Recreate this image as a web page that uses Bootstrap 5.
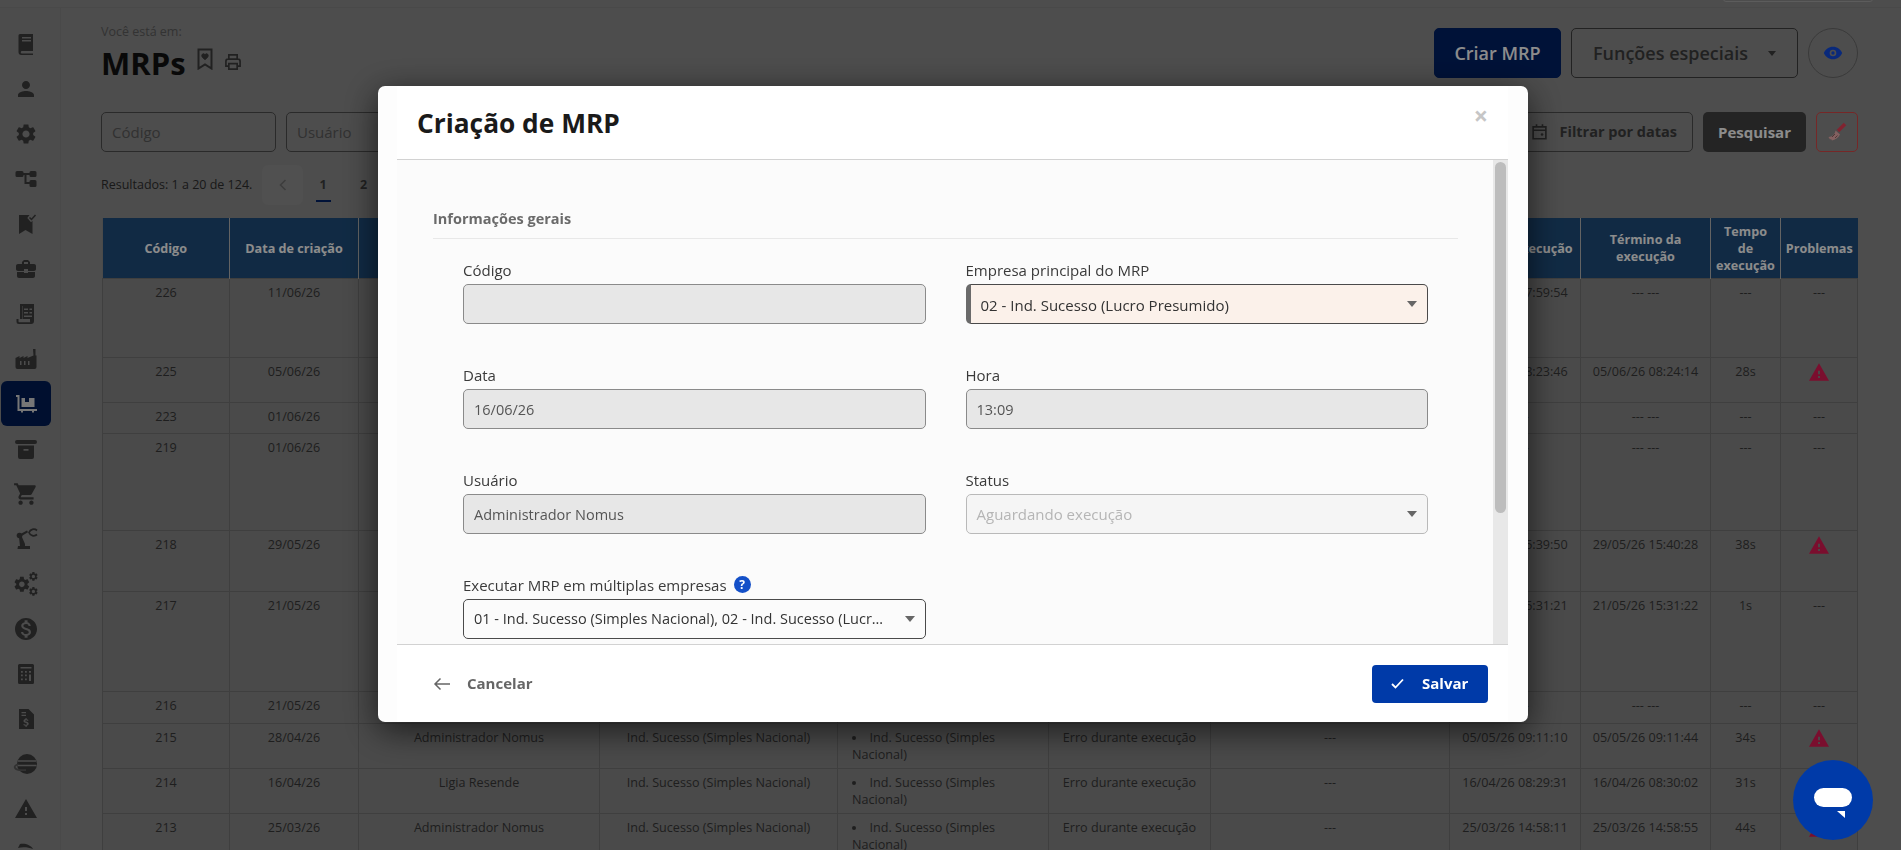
<!DOCTYPE html>
<html lang="pt-BR">
<head>
<meta charset="utf-8">
<title>MRPs</title>
<link href="https://cdn.jsdelivr.net/npm/bootstrap@5.3.0/dist/css/bootstrap.min.css" rel="stylesheet">
<style>
html,body{height:850px;overflow:hidden}
body{font-family:"Open Sans",sans-serif;background:#8c8c8c;color:#3a3a3a;font-size:14px}
.topstrip{height:8px;border-bottom:1px solid #858585;overflow:hidden;padding-right:28px}
.topsearch{width:150px;height:30px;margin-top:-28px;border:1px solid #a8a8a8;border-radius:3px}
.shell{height:842px}
.sidemenu{width:61px;flex:none;border-right:1px solid #858585;background:#8a8a8a;padding:13px 0 0 1px;overflow:hidden}
.sideitem{width:50px;height:45px;border-radius:6px}
.sideitem svg{fill:#3c3c3c}
.sideitem.onpage{background:#001d56}
.sideitem.onpage svg{fill:#d8d8d8}
.mainarea{flex:1;min-width:0;padding:15px 43px 0 40px;overflow:hidden}
.pagehead{height:89px}
.youare{font-size:12.5px;line-height:17px;color:#5d5d5d}
.pagetitle{font-size:31px;font-weight:700;line-height:42px;color:#121212;margin:2px 0 0}
.headicon{fill:none;stroke:#3c3c3c;stroke-width:2}
.titleicons{gap:9px;margin-left:2px}
.bookicon{margin-top:8px}
.printicon{margin-top:12px}
.headactions{gap:10px;margin-top:5px}
.bigbtn{height:50px;font-size:18px;font-weight:600;border-radius:5px;padding:0}
.btn-create{width:127px;background:#002166;border-color:#002166;color:#fff}
.btn-special{width:227px;background:transparent;border:1px solid #3e3e3e;color:#3c3c3c}
.caret-mini{width:0;height:0;border-left:4.5px solid transparent;border-right:4.5px solid transparent;border-top:5px solid #3c3c3c;margin-left:20px}
.btn-eye{width:50px;height:50px;border:1px solid #6a6a6a;border-radius:50%;padding:0;background:transparent}
.filterbar{height:40px;gap:10px}
.pageinput{width:175px;height:40px;border:1px solid #4e4e4e;border-radius:5px;padding:0 10px;font-size:15px;color:#5d5d5d;background:transparent}
.pageinput::placeholder{color:#5a5a5a;opacity:1}
.btn-dates{width:250px;height:40px;border:1px solid #4e4e4e;border-radius:5px;background:transparent;font-size:14.5px;font-weight:700;color:#3c3c3c;padding:0 15px 0 0;gap:12px}
.btn-search{width:103px;height:40px;background:#424242;border:0;border-radius:5px;color:#fff;font-size:15px;font-weight:700;padding:1px 0 0}
.btn-broom{width:42px;height:40px;background:transparent;border:1px solid #d84848;border-radius:5px;padding:0}
.resultbar{height:40px;margin:13px 0 13px}
.resulttext{font-size:12.5px;color:#2e2e2e;margin-right:10px;white-space:nowrap}
.pagerlist{list-style:none;margin:0;padding:0}
.pagerlist li{width:40.5px;height:40px;font-size:12.5px;font-weight:700;color:#3c3c3c;position:relative}
.pagerlist li.prevbox{background:#929292;border-radius:6px;color:#707070}
.pagerlist li.curpage::after{content:"";position:absolute;left:13px;bottom:3px;width:15px;height:2px;background:#002166}
.datatable{table-layout:fixed;width:1755px;margin-left:1px;border-collapse:collapse;font-size:12.6px;line-height:17px;color:#383838;background:#878787}
.datatable th{background:#1f4e7d;color:#fff;font-weight:700;text-align:center;vertical-align:middle;border-right:1px solid #b5b5b5;padding:1px 2px 0;height:60px}
.datatable th:last-child{border-right:0}
.datatable td{border:1px solid #737373;text-align:center;vertical-align:top;padding:5px 8px;overflow:hidden}
.datatable td.nowrapcell{white-space:nowrap;padding:5px 0}
.datatable td.leftcell{text-align:left;padding-left:14px}
.datatable ul{list-style-position:inside;margin:0;padding:0}
.c1{width:127px}.c2{width:129px}.c3{width:241px}.c4{width:238px}.c5{width:211px}.c6{width:162px}.c7{width:239px}.c8{width:131px}.c9{width:130px}.c10{width:70px}.c11{width:77px}
.r79{height:79px}.r45{height:45px}.r31{height:31px}.r97{height:97px}.r61{height:61px}.r100{height:100px}.r32{height:32px}
.warnicon{fill:#de1b54;display:block;margin:0 auto}
.modal-dialog.mrpdialog{max-width:1150px;width:1150px;margin:86px 0 0 378px}
.modal-content.mrpcontent{height:636px;border:0;border-radius:7px;background:#fdfdfd;padding:0 20px 0 19px;box-shadow:0 8px 34px rgba(0,0,0,.65);overflow:hidden;flex-direction:column}
.modal-header.mrphead{height:74px;flex:none;padding:0 20px;background:#fff;border-bottom:1px solid #d2d2d2;border-radius:0;position:relative}
.modal-title.mrptitle{font-size:26.3px;font-weight:700;color:#1a1a1a;line-height:32px;margin-top:0}
.closemark{font-size:25px;line-height:1;color:#c6c6c6;font-weight:700;border:0;background:none;padding:0;position:absolute;right:20px;top:17px}
.bodywrap{height:484px;flex:none;background:#fbfbfb;overflow:hidden}
.modal-body.mrpbody{padding:49px 35px 0 36px;overflow:hidden}
.sectionhead{font-size:14.5px;font-weight:700;line-height:20px;color:#6a6a6a;padding-bottom:9px;border-bottom:1px solid #e8e8e8;margin-bottom:21px}
.fieldwrap{padding:0 30px}
.fieldrow{--bs-gutter-x:40px;--bs-gutter-y:0}
.fieldgroup{margin-bottom:41px}
.fieldlabel{font-size:15px;line-height:18px;color:#3a3a3a;margin-bottom:5px;display:flex;align-items:center;gap:7px;height:19px}
.mrpinput{height:40px;font-size:14.5px;line-height:20px;padding:9px 10px;border:1px solid #8a8a8a;border-radius:5px;color:#333;box-shadow:none}
.mrpinput:disabled{background:#e7e7e7;color:#555;opacity:1;border-color:#8a8a8a}
.mrpselect{height:40px;font-size:15px;line-height:20px;padding:10px 36px 8px 10px;border:1px solid #4a4a4a;border-radius:5px;color:#333;background-color:transparent;background-image:url("data:image/svg+xml,%3Csvg xmlns='http://www.w3.org/2000/svg' viewBox='0 0 10 6'%3E%3Cpath fill='%23666' d='M0 0h10L5 6z'/%3E%3C/svg%3E");background-size:10px 6px;background-position:right 10px center}
.mrpselect.mainfirm{background-color:#fbf1ea;border-left:5px solid #6a6a6a;padding-left:10px}
.mrpselect.lockselect{background-color:#f5f5f5;border-color:#b9b9b9;color:#b5b5b5;padding-top:9px;padding-bottom:9px}
.mrpselect.multifirm{font-size:14.5px;padding-top:9px;padding-bottom:9px}
.helpdot{width:17px;height:17px;border-radius:50%;background:#1450c8;color:#fff;font-size:12px;font-weight:700;line-height:17px;text-align:center}
.fakescroll{width:15px;flex:none;background:#e8e8e8;padding:2px 2px 0}
.fakethumb{height:351px;background:#bdbdbd;border-radius:6px}
.modal-footer.mrpfoot{height:78px;flex:none;padding:0 20px 0 36px;border-top:1px solid #d2d2d2;border-radius:0;justify-content:space-between;background:#fff}
.modal-footer.mrpfoot>*{margin:0}
.btn-cancel{background:none;border:0;padding:0;font-size:15px;font-weight:700;color:#666;gap:16px}
.btn-save{width:116px;height:38px;background:#003aa8;border:0;border-radius:4px;color:#fff;font-size:15px;font-weight:700;padding:0 0 0 19px;gap:18px}
.chatbubble{position:fixed;left:1793px;top:760px;width:80px;height:80px;border-radius:50%;background:#003aa8;z-index:1060}
.modal-backdrop{--bs-backdrop-opacity:.45}
</style>
</head>
<body>
<div class="topstrip d-flex justify-content-end"><div class="topsearch"></div></div>
<div class="shell d-flex">
  <nav class="sidemenu">
    <div class="sideitem d-flex align-items-center justify-content-center"><svg width="24" height="24" viewBox="0 0 24 24"><path fill-rule="evenodd" d="M6 2h13v17H8a1.300 1.300 0 0 0 0 2.600h11V23H7.500A3 3 0 0 1 4.500 20V3.500A1.500 1.500 0 0 1 6 2zm2 3v1.400h9V5zm0 3v1.400h9V8z"/></svg></div>
    <div class="sideitem d-flex align-items-center justify-content-center"><svg width="24" height="24" viewBox="0 0 24 24"><path d="M12 12c2.210 0 4-1.790 4-4s-1.790-4-4-4-4 1.790-4 4 1.790 4 4 4zm0 2c-2.670 0-8 1.340-8 4v2h16v-2c0-2.660-5.330-4-8-4z"/></svg></div>
    <div class="sideitem d-flex align-items-center justify-content-center"><svg width="24" height="24" viewBox="0 0 24 24"><path d="M19.140 12.940c.04-.3.060-.61.060-.94 0-.32-.02-.64-.07-.94l2.030-1.580c.18-.14.230-.41.120-.61l-1.920-3.320c-.12-.22-.37-.29-.59-.22l-2.390.96c-.5-.38-1.030-.7-1.620-.94l-.36-2.540c-.04-.24-.24-.41-.48-.41h-3.840c-.24 0-.43.170-.47.41l-.36 2.540c-.59.24-1.130.57-1.620.94l-2.390-.96c-.22-.08-.47 0-.59.22L2.740 8.870c-.12.21-.08.47.12.61l2.030 1.580c-.05.3-.09.63-.09.94s.02.64.07.94l-2.030 1.580c-.18.14-.23.41-.12.61l1.920 3.320c.12.22.37.29.59.22l2.390-.96c.5.38 1.030.7 1.620.94l.36 2.540c.05.24.24.41.48.41h3.840c.24 0 .44-.17.47-.41l.36-2.540c.59-.24 1.130-.56 1.620-.94l2.390.96c.22.08.47 0 .59-.22l1.920-3.320c.12-.22.070-.47-.12-.61l-2.010-1.580zM12 15.600c-1.980 0-3.600-1.620-3.600-3.600s1.620-3.600 3.600-3.600 3.600 1.620 3.600 3.600-1.620 3.600-3.600 3.600z"/></svg></div>
    <div class="sideitem d-flex align-items-center justify-content-center"><svg width="24" height="24" viewBox="0 0 24 24"><path d="M3 4h5a1.500 1.500 0 0 1 1.500 1.500V6h6v-.5A1.500 1.500 0 0 1 17 4h4a1.500 1.500 0 0 1 1.500 1.500v3A1.500 1.500 0 0 1 21 10h-4a1.500 1.500 0 0 1-1.500-1.500V8h-3v7h3v-.5A1.500 1.500 0 0 1 17 13h4a1.500 1.500 0 0 1 1.500 1.500v4A1.500 1.500 0 0 1 21 20h-4a1.500 1.500 0 0 1-1.500-1.500V17h-5V8h-1v.5A1.500 1.500 0 0 1 8 10H3a1.500 1.500 0 0 1-1.500-1.500v-3A1.500 1.500 0 0 1 3 4z"/></svg></div>
    <div class="sideitem d-flex align-items-center justify-content-center"><svg width="24" height="24" viewBox="0 0 24 24"><path d="M5 3h10.500l-2.200 3 3.700 4.200 1.500-1.400V22l-7-4-6.500 4z"/><path d="M15.500 5.500l2 2 4-4.500" fill="none" stroke="#3c3c3c" stroke-width="1.500"/></svg></div>
    <div class="sideitem d-flex align-items-center justify-content-center"><svg width="24" height="24" viewBox="0 0 24 24"><path d="M10 16v-1H3.010L3 19c0 1.110.89 2 2 2h14c1.110 0 2-.89 2-2v-4h-7v1h-4zm10-9h-4.010V5l-2-2h-4l-2 2v2H4c-1.100 0-2 .9-2 2v3c0 1.110.89 2 2 2h6v-2h4v2h6c1.100 0 2-.9 2-2V9c0-1.100-.9-2-2-2zm-6 0h-4V5h4v2z"/></svg></div>
    <div class="sideitem d-flex align-items-center justify-content-center"><svg width="24" height="24" viewBox="0 0 24 24"><path fill-rule="evenodd" d="M6 2h14v17a3 3 0 0 1-3 3H5a2.500 2.500 0 0 1-2.500-2.500V17H6zm2 2v13H4.500v2.500a.9.9 0 0 0 .5.8h11.300a2 2 0 0 1-.3-1V17H8.500V4zM10 6.500V8h4V6.500zm5.500 0V8H18V6.500zM10 10v1.500h4V10zm5.500 0v1.500H18V10zM10 13.500V15h8v-1.500z"/></svg></div>
    <div class="sideitem d-flex align-items-center justify-content-center"><svg width="24" height="24" viewBox="0 0 24 24"><path fill-rule="evenodd" d="M19 2h2.500v6.500h1V20a2 2 0 0 1-2 2H3.500a2 2 0 0 1-2-2v-9l4-2v2l4-2v2l4-2v2l6-2.500zM6 14v4h1.500v-4zm4 0v4h1.500v-4zm4 0v4h1.500v-4z"/></svg></div>
    <div class="sideitem onpage d-flex align-items-center justify-content-center"><svg width="24" height="24" viewBox="0 0 24 24"><path fill-rule="evenodd" d="M2 3h3.500v14H23v2h-3v1.500h-2V19H9v1.500H7V19H3.500V5H2zM7.500 6H11v4h4V6h5.500v9H7.500z"/></svg></div>
    <div class="sideitem d-flex align-items-center justify-content-center"><svg width="24" height="24" viewBox="0 0 24 24"><path fill-rule="evenodd" d="M3 3h18a1.500 1.500 0 0 1 0 4H3a1.500 1.500 0 0 1 0-4zm1 5.500h16V20a2 2 0 0 1-2 2H6a2 2 0 0 1-2-2zM9.500 12v1.800h5V12z"/></svg></div>
    <div class="sideitem d-flex align-items-center justify-content-center"><svg width="26" height="26" viewBox="0 0 24 24"><path d="M7 18c-1.100 0-1.990.9-1.990 2S5.900 22 7 22s2-.9 2-2-.9-2-2-2zM1 2v2h2l3.600 7.590-1.350 2.450c-.16.28-.25.61-.25.96 0 1.100.9 2 2 2h12v-2H7.420c-.14 0-.25-.11-.25-.25l.03-.12.9-1.630h7.450c.75 0 1.410-.41 1.750-1.030l3.580-6.490c.08-.14.12-.31.12-.48 0-.55-.45-1-1-1H5.210l-.94-2H1zm16 16c-1.100 0-1.990.9-1.990 2s.89 2 1.990 2 2-.9 2-2-.9-2-2-2z"/></svg></div>
    <div class="sideitem d-flex align-items-center justify-content-center"><svg width="24" height="24" viewBox="0 0 24 24"><path d="M4 19h12v3H3.500zM6 19l-1-9 2.500-1L11 17v2z"/><circle cx="5.500" cy="8.500" r="2.800"/><path d="M7 6.800l6-3.300 1 1.800-6 3.500z"/><path d="M23 3.500a5 5 0 0 0-8 2 5 5 0 0 0 8 2" fill="none" stroke="#3c3c3c" stroke-width="1.700"/></svg></div>
    <div class="sideitem d-flex align-items-center justify-content-center"><svg width="24" height="24" viewBox="0 0 24 24"><defs><path id="gearshape" d="M19.140 12.940c.04-.3.060-.61.060-.94 0-.32-.02-.64-.07-.94l2.030-1.580c.18-.14.230-.41.120-.61l-1.920-3.320c-.12-.22-.37-.29-.59-.22l-2.390.96c-.5-.38-1.030-.7-1.620-.94l-.36-2.540c-.04-.24-.24-.41-.48-.41h-3.840c-.24 0-.43.170-.47.41l-.36 2.540c-.59.24-1.130.57-1.620.94l-2.390-.96c-.22-.08-.47 0-.59.22L2.740 8.870c-.12.21-.08.47.12.61l2.030 1.580c-.05.3-.09.63-.09.94s.02.64.07.94l-2.030 1.580c-.18.14-.23.41-.12.61l1.920 3.320c.12.22.37.29.59.22l2.390-.96c.5.38 1.030.7 1.620.94l.36 2.540c.05.24.24.41.48.41h3.840c.24 0 .44-.17.47-.41l.36-2.540c.59-.24 1.130-.56 1.620-.94l2.390.96c.22.08.47 0 .59-.22l1.920-3.320c.12-.22.070-.47-.12-.61l-2.010-1.580zM12 15.600c-1.980 0-3.600-1.620-3.600-3.600s1.620-3.600 3.600-3.600 3.600 1.620 3.600 3.600-1.620 3.600-3.600 3.600z"/></defs><use href="#gearshape" transform="translate(-1.500 3) scale(.78)"/><use href="#gearshape" transform="translate(14 -1) scale(.45)"/><use href="#gearshape" transform="translate(14 14) scale(.45)"/></svg></div>
    <div class="sideitem d-flex align-items-center justify-content-center"><svg width="24" height="24" viewBox="0 0 24 24"><path transform="translate(-1.200 -1.200) scale(1.100)" d="M12 2C6.480 2 2 6.480 2 12s4.480 10 10 10 10-4.480 10-10S17.520 2 12 2zm1.410 16.090V20h-2.670v-1.930c-1.710-.36-3.160-1.460-3.270-3.400h1.960c.1 1.050.82 1.870 2.650 1.870 1.960 0 2.400-.98 2.400-1.590 0-.83-.44-1.610-2.670-2.140-2.480-.6-4.180-1.620-4.180-3.670 0-1.720 1.390-2.840 3.110-3.210V4h2.670v1.950c1.860.45 2.790 1.860 2.870 3.390H14.300c-.05-1.110-.64-1.870-2.220-1.870-1.500 0-2.400.68-2.400 1.640 0 .84.65 1.390 2.670 1.910s4.180 1.390 4.180 3.910c-.01 1.830-1.380 2.830-3.120 3.160z"/></svg></div>
    <div class="sideitem d-flex align-items-center justify-content-center"><svg width="24" height="24" viewBox="0 0 24 24"><path fill-rule="evenodd" d="M5.500 2h13A1.500 1.500 0 0 1 20 3.500v17a1.500 1.500 0 0 1-1.500 1.500h-13A1.500 1.500 0 0 1 4 20.500v-17A1.500 1.500 0 0 1 5.500 2zM6.500 5v1.500h11V5zM7 9v1.800h1.800V9zm4 0v1.800h1.800V9zm4 0v1.800h2V9zm-8 3.500v1.800h1.800v-1.800zm4 0v1.800h1.800v-1.800zm4 0V19h2v-6.500zM7 16.500v1.800h1.800v-1.800zm4 0v1.800h1.800v-1.800z"/></svg></div>
    <div class="sideitem d-flex align-items-center justify-content-center"><svg width="24" height="24" viewBox="0 0 24 24"><path fill-rule="evenodd" d="M5 2h9.500l5.500 5.500V22H5zm2.500 3v1.300h4.500V5zm0 2.700V9h4.500V7.700zm4 3.300v1.100c-1.300.2-2 1-2 2 0 2.400 3.500 1.500 3.500 2.800 0 .5-.5.8-1.200.8-.8 0-1.400-.3-1.700-.8l-.9.8c.4.6 1.200 1 2.300 1.100V20h1.200v-1.200c1.200-.2 2-1 2-2 0-2.500-3.500-1.700-3.500-2.800 0-.4.4-.7 1-.7s1.200.3 1.500.7l.9-.8c-.5-.6-1.200-.9-2-1V11z"/></svg></div>
    <div class="sideitem d-flex align-items-center justify-content-center"><svg width="28" height="24" viewBox="0 0 28 24"><circle cx="15" cy="12" r="10"/><path d="M6 9h18M5.500 13.500h19" stroke="#8a8a8a" stroke-width="1.400"/><path d="M6.500 12c-3 .9-4.500 2.500-3.500 4 1.200 1.800 6 2.500 11 2" fill="none" stroke="#5a5a5a" stroke-width="1.800"/></svg></div>
    <div class="sideitem d-flex align-items-center justify-content-center"><svg width="22" height="21" viewBox="1 2 22 19"><path d="M1 21h22L12 2 1 21zm12-3h-2v-2h2v2zm0-4h-2v-4h2v4z"/></svg></div>
    <div class="sideitem d-flex align-items-center justify-content-center"><svg width="24" height="24" viewBox="0 0 24 24"><path d="M6 2c5-1 11 1 13 5-5-2-11-2-15-1z"/></svg></div>
  </nav>
  <main class="mainarea">
    <div class="pagehead d-flex justify-content-between align-items-start">
      <div>
        <div class="youare">Você está em:</div>
        <div class="d-flex align-items-start gap-2">
          <h1 class="pagetitle">MRPs</h1>
          <div class="titleicons d-flex align-items-start">
            <svg class="headicon bookicon" width="18" height="22" viewBox="0 0 18 22"><path d="M2.500 1.500h13v19l-6.500-4-6.500 4z"/><path d="M9 11.500c-5-3-3-6-1.300-5.700.7.100 1 .5 1.300 1 .3-.5.6-.9 1.300-1 1.700-.3 3.700 2.700-1.300 5.700z" fill="#3c3c3c" stroke-width="1"/></svg>
            <svg class="headicon printicon" width="20" height="20" viewBox="0 0 24 24"><path d="M7 8V3.500h10V8M6.500 17H3.500v-6A2.500 2.500 0 0 1 6 8.500h12a2.500 2.500 0 0 1 2.500 2.500v6h-3"/><path d="M7 14h10v6.500H7z"/></svg>
          </div>
        </div>
      </div>
      <div class="headactions d-flex">
        <button type="button" class="btn bigbtn btn-create">Criar MRP</button>
        <button type="button" class="btn bigbtn btn-special d-flex align-items-center justify-content-center">Funções especiais<span class="caret-mini"></span></button>
        <button type="button" class="btn btn-eye d-flex align-items-center justify-content-center"><svg width="20" height="20" viewBox="0 0 24 24" fill="#124ce0"><path fill-rule="evenodd" d="M12 4.500C7 4.500 2.730 7.610 1 12c1.730 4.390 6 7.500 11 7.500s9.270-3.110 11-7.500c-1.730-4.390-6-7.500-11-7.500zM12 16a4 4 0 1 1 0-8 4 4 0 0 1 0 8zm0-2a2 2 0 1 0 0-4 2 2 0 0 0 0 4z"/></svg></button>
      </div>
    </div>
    <div class="filterbar d-flex">
      <input class="pageinput" placeholder="Código" aria-label="Código">
      <input class="pageinput" placeholder="Usuário" aria-label="Usuário">
      <button type="button" class="btn-dates ms-auto d-flex align-items-center justify-content-end"><svg width="17" height="18" viewBox="0 0 20 20" fill="none" stroke="#3c3c3c" stroke-width="1.900"><path d="M2.500 4h15v14h-15zM2.500 8h15M6.500 1V5M13.500 1V5"/><circle cx="13" cy="13" r="1.500" fill="#3c3c3c" stroke="none"/></svg><span>Filtrar por datas</span></button>
      <button type="button" class="btn-search">Pesquisar</button>
      <button type="button" class="btn-broom d-flex align-items-center justify-content-center"><svg width="20" height="20" viewBox="0 0 20 20"><path d="M11 9l7-7" stroke="#ec4058" stroke-width="3.500"/><path d="M1.500 15c4 0 6.500-3 7-6.500l4.500 4c-1.500 3-5 5.500-8 6l-1-1.500-1 .5z" fill="#eeb0b0"/><path d="M5 15l3-3M8 16l2.500-2.500" stroke="#7a5050" stroke-width=".8"/></svg></button>
    </div>
    <div class="resultbar d-flex align-items-center">
      <span class="resulttext">Resultados: 1 a 20 de 124.</span>
      <ul class="pagerlist d-flex">
        <li class="prevbox d-flex align-items-center justify-content-center"><svg width="8" height="12" viewBox="0 0 8 12" fill="none" stroke="#707070" stroke-width="1.600"><path d="M6.500 1l-5 5 5 5"/></svg></li>
        <li class="curpage d-flex align-items-center justify-content-center">1</li>
        <li class="d-flex align-items-center justify-content-center">2</li>
        <li class="d-flex align-items-center justify-content-center">3</li>
      </ul>
    </div>
    <table class="datatable">
      <colgroup><col class="c1"><col class="c2"><col class="c3"><col class="c4"><col class="c5"><col class="c6"><col class="c7"><col class="c8"><col class="c9"><col class="c10"><col class="c11"></colgroup>
      <thead><tr><th>Código</th><th>Data de criação</th><th>Usuário</th><th>Empresa principal</th><th>Empresas</th><th>Status</th><th>Problema</th><th>Início da execução</th><th>Término da execução</th><th>Tempo<br>de<br>execução</th><th>Problemas</th></tr></thead>
      <tbody>
        <tr class="r79"><td>226</td><td>11/06/26</td><td></td><td></td><td></td><td></td><td></td><td class="nowrapcell">11/06/26 07:59:54</td><td>--- ---</td><td>---</td><td>---</td></tr>
        <tr class="r45"><td>225</td><td>05/06/26</td><td></td><td></td><td></td><td></td><td></td><td class="nowrapcell">05/06/26 08:23:46</td><td class="nowrapcell">05/06/26 08:24:14</td><td>28s</td><td><svg class="warnicon" width="20" height="18" viewBox="1 2 22 19"><path d="M1 21h22L12 2 1 21zm12-3h-2v-2h2v2zm0-4h-2v-4h2v4z"/></svg></td></tr>
        <tr class="r31"><td>223</td><td>01/06/26</td><td></td><td></td><td></td><td></td><td></td><td>--- ---</td><td>--- ---</td><td>---</td><td>---</td></tr>
        <tr class="r97"><td>219</td><td>01/06/26</td><td></td><td></td><td></td><td></td><td></td><td>--- ---</td><td>--- ---</td><td>---</td><td>---</td></tr>
        <tr class="r61"><td>218</td><td>29/05/26</td><td></td><td></td><td></td><td></td><td></td><td class="nowrapcell">29/05/26 15:39:50</td><td class="nowrapcell">29/05/26 15:40:28</td><td>38s</td><td><svg class="warnicon" width="20" height="18" viewBox="1 2 22 19"><path d="M1 21h22L12 2 1 21zm12-3h-2v-2h2v2zm0-4h-2v-4h2v4z"/></svg></td></tr>
        <tr class="r100"><td>217</td><td>21/05/26</td><td></td><td></td><td></td><td></td><td></td><td class="nowrapcell">21/05/26 15:31:21</td><td class="nowrapcell">21/05/26 15:31:22</td><td>1s</td><td>---</td></tr>
        <tr class="r32"><td>216</td><td>21/05/26</td><td></td><td></td><td></td><td></td><td></td><td>--- ---</td><td>--- ---</td><td>---</td><td>---</td></tr>
        <tr class="r45"><td>215</td><td>28/04/26</td><td>Administrador Nomus</td><td>Ind. Sucesso (Simples Nacional)</td><td class="leftcell"><ul><li>Ind. Sucesso (Simples Nacional)</li></ul></td><td>Erro durante execução</td><td>---</td><td class="nowrapcell">05/05/26 09:11:10</td><td class="nowrapcell">05/05/26 09:11:44</td><td>34s</td><td><svg class="warnicon" width="20" height="18" viewBox="1 2 22 19"><path d="M1 21h22L12 2 1 21zm12-3h-2v-2h2v2zm0-4h-2v-4h2v4z"/></svg></td></tr>
        <tr class="r45"><td>214</td><td>16/04/26</td><td>Ligia Resende</td><td>Ind. Sucesso (Simples Nacional)</td><td class="leftcell"><ul><li>Ind. Sucesso (Simples Nacional)</li></ul></td><td>Erro durante execução</td><td>---</td><td class="nowrapcell">16/04/26 08:29:31</td><td class="nowrapcell">16/04/26 08:30:02</td><td>31s</td><td><svg class="warnicon" width="20" height="18" viewBox="1 2 22 19"><path d="M1 21h22L12 2 1 21zm12-3h-2v-2h2v2zm0-4h-2v-4h2v4z"/></svg></td></tr>
        <tr class="r45"><td>213</td><td>25/03/26</td><td>Administrador Nomus</td><td>Ind. Sucesso (Simples Nacional)</td><td class="leftcell"><ul><li>Ind. Sucesso (Simples Nacional)</li></ul></td><td>Erro durante execução</td><td>---</td><td class="nowrapcell">25/03/26 14:58:11</td><td class="nowrapcell">25/03/26 14:58:55</td><td>44s</td><td><svg class="warnicon" width="20" height="18" viewBox="1 2 22 19"><path d="M1 21h22L12 2 1 21zm12-3h-2v-2h2v2zm0-4h-2v-4h2v4z"/></svg></td></tr>
      </tbody>
    </table>
  </main>
</div>
<div class="modal-backdrop fade show"></div>
<div class="modal d-block" tabindex="-1" role="dialog">
  <div class="modal-dialog mrpdialog">
    <div class="modal-content mrpcontent">
      <div class="modal-header mrphead">
        <h2 class="modal-title mrptitle">Criação de MRP</h2>
        <button type="button" class="closemark" aria-label="Fechar">×</button>
      </div>
      <div class="bodywrap d-flex">
        <div class="modal-body mrpbody">
          <div class="sectionhead">Informações gerais</div>
          <div class="fieldwrap">
            <div class="row fieldrow">
              <div class="col-6 fieldgroup"><label class="fieldlabel">Código</label><input class="form-control mrpinput" disabled></div>
              <div class="col-6 fieldgroup"><label class="fieldlabel">Empresa principal do MRP</label><div class="form-select mrpselect mainfirm text-truncate">02 - Ind. Sucesso (Lucro Presumido)</div></div>
              <div class="col-6 fieldgroup"><label class="fieldlabel">Data</label><input class="form-control mrpinput" disabled value="16/06/26"></div>
              <div class="col-6 fieldgroup"><label class="fieldlabel">Hora</label><input class="form-control mrpinput" disabled value="13:09"></div>
              <div class="col-6 fieldgroup"><label class="fieldlabel">Usuário</label><input class="form-control mrpinput" disabled value="Administrador Nomus"></div>
              <div class="col-6 fieldgroup"><label class="fieldlabel">Status</label><div class="form-select mrpselect lockselect text-truncate">Aguardando execução</div></div>
              <div class="col-6 fieldgroup"><label class="fieldlabel">Executar MRP em múltiplas empresas <span class="helpdot">?</span></label><div class="form-select mrpselect multifirm text-truncate">01 - Ind. Sucesso (Simples Nacional), 02 - Ind. Sucesso (Lucro Presumido)</div></div>
            </div>
          </div>
        </div>
        <div class="fakescroll"><div class="fakethumb"></div></div>
      </div>
      <div class="modal-footer mrpfoot">
        <button type="button" class="btn-cancel d-flex align-items-center"><svg width="18" height="14" viewBox="0 0 18 14" fill="none" stroke="#666" stroke-width="1.500"><path d="M17 7H2M7.500 1.500L2 7l5.500 5.500"/></svg>Cancelar</button>
        <button type="button" class="btn-save d-flex align-items-center"><svg width="13" height="11" viewBox="0 0 13 11" fill="none" stroke="#fff" stroke-width="1.800"><path d="M1 6l3.500 3.500L12 1.500"/></svg>Salvar</button>
      </div>
    </div>
  </div>
</div>
<div class="chatbubble d-flex align-items-center justify-content-center"><svg width="40" height="36" viewBox="0 0 40 36"><rect x="1" y="6" width="38" height="19" rx="9.500" fill="#fff"/><path d="M24 29h8v7z" fill="#fff"/></svg></div>
</body>
</html>
